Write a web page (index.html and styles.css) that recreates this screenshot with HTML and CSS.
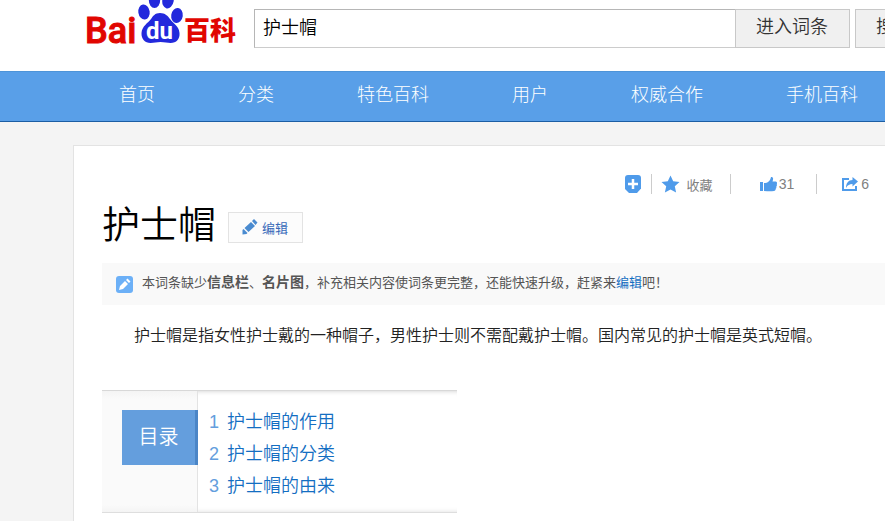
FILE: index.html
```html
<!DOCTYPE html>
<html lang="zh-CN">
<head>
  <meta charset="UTF-8" />
  <meta name="viewport" content="width=device-width, initial-scale=1.0" />
  <title>护士帽_百度百科</title>
  <link rel="stylesheet" href="styles.css">
</head>
<body>
  <header class="header">
    <a class="logo" href="#" aria-label="百度百科">
      <svg width="160" height="60" viewBox="0 0 160 60">
        <g fill="#2329dc">
          <ellipse cx="58" cy="12" rx="5.700" ry="7.500" transform="rotate(-8 58 12)" />
          <ellipse cx="68.500" cy="0" rx="5.700" ry="8" />
          <ellipse cx="82" cy="0.500" rx="5.700" ry="8" transform="rotate(10 82 0.5)" />
          <ellipse cx="91" cy="15.500" rx="5.800" ry="7.500" transform="rotate(8 91 15.5)" />
          <path d="M74 13c-5 0-7 3-9 6-3 4-9 7-9.500 14-.3 6 3.500 10 9 10 4 0 6-1 10-1s7 1 10 1c6 0 9.500-4 9-10-.5-7-6-9-9.500-14-2-3-5-6-10-6z" />
        </g>
        <text class="logo-bai" x="-1" y="43">Bai</text>
        <text class="logo-du" x="60" y="39">du</text>
        <text class="logo-baike" x="98" y="40">百科</text>
      </svg>
    </a>
    <form class="search">
      <input class="search-input" type="text" value="护士帽" aria-label="搜索词条" />
      <button class="search-btn" type="button">进入词条</button>
      <button class="search-btn search-all" type="button">搜索词条</button>
    </form>
  </header>

  <nav class="nav">
    <a href="#">首页</a>
    <a href="#">分类</a>
    <a href="#">特色百科</a>
    <a href="#">用户</a>
    <a href="#">权威合作</a>
    <a href="#">手机百科</a>
  </nav>

  <main class="content">
    <div class="tools">
      <button class="tool tool-add" type="button" aria-label="添加">
        <svg width="16" height="18" viewBox="0 0 16 18">
          <path d="M3 0h10q3 0 3 3v10.500L12 18H4l-4-4V3q0-3 3-3z" fill="#4f9bea" />
          <path d="M8 4v10M3 9h10" stroke="#fff" stroke-width="2.500" />
        </svg>
      </button>
      <button class="tool tool-fav" type="button">
        <svg width="19" height="18" viewBox="0 0 19 18">
          <path d="M9.500 .5l2.700 5.800 6.300.7-4.700 4.300 1.300 6.300-5.600-3.200-5.600 3.200 1.300-6.300L.5 7l6.300-.7z" fill="#4f9bea" />
        </svg>
        收藏
      </button>
      <button class="tool tool-like" type="button">
        <svg width="17" height="15" viewBox="0 0 17 15">
          <path d="M0 5h3v9H0zM4 6c4 0 6-2 7-6 2.500 0 2.500 1.500 1.500 4.500H15c2 0 2.500 1.500 1.800 2.500.2 1 .1 2-.5 2.500.2 1 0 1.800-.6 2.200 0 1.300-.5 2.100-1.700 2.300-3 .5-6 .3-10 0z" fill="#4f9bea" />
        </svg>
        <span>31</span>
      </button>
      <button class="tool tool-share" type="button">
        <svg width="17" height="15" viewBox="0 0 17 15">
          <path d="M7 2H1v11h13V9" fill="none" stroke="#4f9bea" stroke-width="2" />
          <path d="M10.500 0L16 4.500 10.500 9.500V7C7.500 7 5.500 8 4 11c0-5 2.500-8 6.500-8z" fill="#4f9bea" />
        </svg>
        <span>6</span>
      </button>
    </div>

    <div class="title-row">
      <h1>护士帽</h1>
      <a class="edit-btn" href="#">
        <svg width="16" height="16" viewBox="0 0 16 16">
          <path d="M2.500 9L9 3l4 4-6.500 6zM10 2l2-2 3.500 3.500-2 2.500zM.5 11l1-1 4 4-1 1-4 .500z" fill="#4a8bd0" />
        </svg>
        编辑
      </a>
    </div>

    <div class="notice">
      <svg width="17" height="17" viewBox="0 0 17 17">
        <rect width="17" height="17" rx="3" fill="#6cb0f7" />
        <path d="M3 14l1-4 5-5 3 3-5 5zM10 4l1.500-1.500 3 3L13 7z" fill="#fff" />
      </svg>
      <p>本词条缺少<b>信息栏</b>、<b>名片图</b>，补充相关内容使词条更完整，还能快速升级，赶紧来<a href="#">编辑</a>吧！</p>
    </div>

    <p class="summary">护士帽是指女性护士戴的一种帽子，男性护士则不需配戴护士帽。国内常见的护士帽是英式短帽。</p>

    <section class="catalog">
      <div class="catalog-side">
        <h2>目录</h2>
      </div>
      <ol class="catalog-list">
        <li><span>1</span><a href="#">护士帽的作用</a></li>
        <li><span>2</span><a href="#">护士帽的分类</a></li>
        <li><span>3</span><a href="#">护士帽的由来</a></li>
      </ol>
    </section>
  </main>
</body>
</html>
```
FILE: styles.css
```css
* { box-sizing: border-box; }
body { margin: 0; background: #f4f4f4; color: #333; font-family: "Liberation Sans", "Noto Sans CJK SC", sans-serif; overflow-x: hidden; }
a { color: #136ec2; text-decoration: none; }
h1, h2, p, ol { margin: 0; padding: 0; font-weight: normal; }
button { font-family: inherit; cursor: pointer; }
svg { display: block; flex: none; }

.header { display: flex; height: 71px; padding-left: 86px; background: #fff; overflow: hidden; }
.logo { flex: none; width: 168px; }
.logo-bai { font: 500 36px Roboto, sans-serif; fill: #e10601; stroke: #e10601; stroke-width: 1; }
.logo-du { font: bold 24px Roboto, sans-serif; fill: #fff; }
.logo-baike { font: 900 26px "Noto Sans CJK SC", sans-serif; fill: #e10601; }

.search { display: flex; flex: none; padding-top: 9px; }
.search-input { width: 482px; height: 39px; padding: 0 8px 5px; border: 1px solid #ccc; border-color: #b6b6b6 #ccc #ccc #b6b6b6; font: 350 18px "Liberation Sans", "Noto Sans CJK SC", sans-serif; color: #000; }
.search-btn { height: 39px; margin-left: -1px; padding: 0 21px 7px 20px; border: 1px solid #c8c8c8; background: #f0f0f0; color: #333; font-size: 18px; font-weight: 350; }
.search-all { margin-left: 5px; }

.nav { display: flex; gap: 83px; height: 51px; padding-left: 119px; border-top: 1px solid #4e94d8; border-bottom: 1px solid #1c5ea4; background: #599fe8; overflow: hidden; }
.nav a { flex: none; color: #fff; font-size: 18px; font-weight: 300; line-height: 46px; }

.content { margin: 23px 0 0 73px; padding: 28px 0 8px 28px; border: 1px solid #e3e3e3; border-width: 1px 0 0 1px; background: #fff; }

.tools { display: flex; justify-content: flex-end; height: 21px; padding-right: 16px; }
.tool { display: flex; align-items: center; height: 20px; padding: 0; border: 0; background: none; color: #808080; font-size: 13px; }
.tool + .tool { border-left: 1px solid #ccc; }
.tool-add { padding-right: 10px; }
.tool-fav { gap: 7px; padding: 0 17px 0 9px; }
.tool-like { gap: 2px; padding: 0 22px 0 29px; font-size: 14px; }
.tool-share { gap: 2px; padding-left: 25px; font-size: 14px; }

.title-row { display: flex; align-items: center; gap: 12px; height: 60px; }
h1 { color: #000; font-size: 38px; font-weight: 350; line-height: 60px; }
.edit-btn { display: flex; align-items: center; gap: 4px; height: 31px; margin-top: 4px; padding: 0 14px 0 13px; border: 1px solid #e3e3e3; background: #fcfcfc; color: #3769b9; font-size: 13px; }

.notice { display: flex; align-items: center; gap: 9px; height: 42px; margin-top: 8px; padding-left: 14px; background: #f9f9f9; }
.notice p { padding-bottom: 3px; color: #555; font-size: 13px; line-height: 20px; white-space: nowrap; }
.notice b { font-size: 14px; font-weight: bold; }

.summary { margin-top: 19px; padding-left: 32px; color: #222; font-size: 16px; font-weight: 350; line-height: 24px; white-space: nowrap; }

.catalog { display: flex; width: 355px; margin-top: 42px; border-top: 1px solid #d8d8d8; border-bottom: 1px solid #dedede; box-shadow: inset 0 5px 5px -5px #ccc, inset 0 -5px 5px -5px #ddd; }
.catalog-side { width: 96px; padding: 19px 0 0 20px; border-right: 1px solid #e3e3e3; background: linear-gradient(#f4f4f4, #fafafa 8px, #fafafa 114px, #f4f4f4); }
.catalog h2 { margin-right: -1px; border-right: 3px solid #4b85c6; background: #649edd; color: #fff; font-size: 20px; font-weight: 350; line-height: 55px; text-align: center; }
.catalog-list { padding: 15px 0 10px 11px; list-style: none; font-size: 18px; font-weight: 350; line-height: 32px; }
.catalog-list li { display: flex; gap: 8px; }
.catalog-list span { color: #649edd; }
```
